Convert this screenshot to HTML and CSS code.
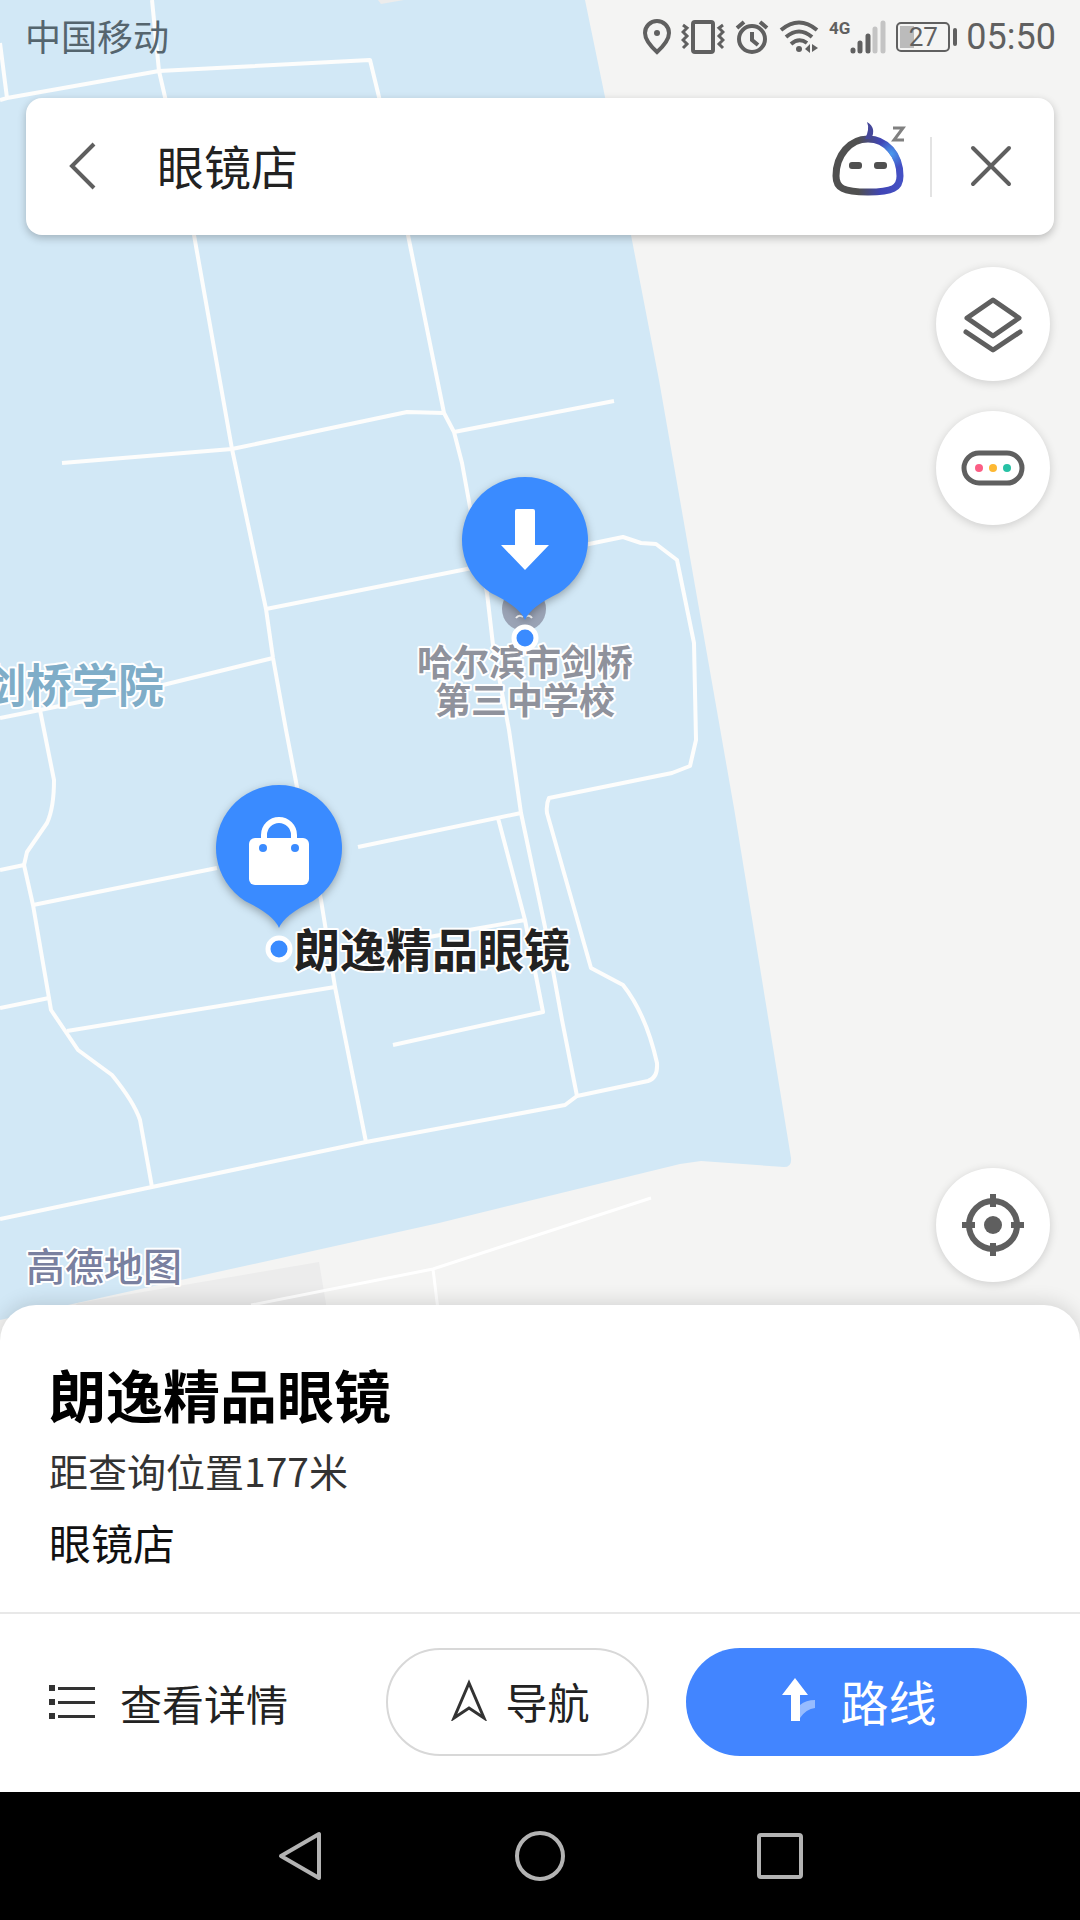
FILE: index.html
```
<!DOCTYPE html>
<html lang="zh-CN">
  <head>
    <meta charset="utf-8">
    <meta name="viewport" content="width=device-width, initial-scale=1">
    <title>眼镜店</title>
    <link rel="stylesheet" href="styles.css">
  </head>

  <body>

    <main class="map">
      <svg class="mapCanvas" viewBox="0 0 1080 1340" preserveAspectRatio="xMinYMin slice">
        <!-- campus area -->
        <path class="campus" d="M0 0H585L605 97L631 235L659 380L691 563L734 808L791 1158Q792 1167 784 1167L701 1161L680 1164L439 1223L68 1305L0 1320Z"/>
        <path class="block" d="M378 0L381 4L404 0ZM78 1303L319 1262L327 1310H68Z"/>

        <!-- roads -->
        <g class="road">
          <path d="M152 0L159 71L165 97L194 235L232 449L266 609L273 658L286 730L297 787L321 900L335 987L366 1142"/>
          <path d="M0 43L7 98M0 100L7 98L159 71L370 60L379 97L408 235L444 413L454 432L462 463L470 507L487 593L493 645L509 730L521 813L545 927L562 1020L577 1096"/>
          <path d="M62 463L232 449L407 412L444 413M454 432L614 401"/>
          <path d="M266 609L467 569L589 544L623 537L641 543L656 544L677 560L694 643L696 740L690 766L672 773L549 798Q546 804 547 813L591 968L623 985Q646 1014 657 1063Q658 1078 648 1081L577 1096L565 1105L366 1142L152 1187L0 1219"/>
          <path d="M0 718L40 710L163 685L273 658"/>
          <path d="M40 710L54 780Q54 808 47 823L27 852L24 865L33 905L49 998L51 1010L78 1050L112 1075Q134 1102 140 1120L152 1187"/>
          <path d="M0 870L24 865M33 905L217 868M0 1008L49 998M67 1031L335 987"/>
          <path d="M358 847L521 813M498 818L525 920L543 1012L393 1045M525 920L429 937"/>
        </g>
        <path class="path" d="M651 1198L433 1269L251 1305M433 1269L438 1310"/>

        <!-- labels -->
        <circle class="schoolDot" cx="524" cy="609" r="22"/>
        <path class="schoolMark" d="M516 618Q519 614 523 617M525 617Q529 614 532 618"/>
        <text class="label college" x="164" y="702" text-anchor="end">剑桥学院</text>
        <text class="label school" x="525" y="676" text-anchor="middle">哈尔滨市剑桥</text>
        <text class="label school" x="525" y="714" text-anchor="middle">第三中学校</text>
        <text class="label shop" x="294" y="967">朗逸精品眼镜</text>
        <text class="label brand" x="26" y="1281">高德地图</text>

        <!-- pins -->
        <g transform="translate(525 540)">
          <path class="pin" d="M0 80Q-5 67 -34 53A63 63 0 1 1 34 53Q5 67 0 80Z"/>
          <path fill="#fff" d="M-8-31H8Q10-31 10-29V5H24L0 30L-24 5H-10V-29Q-10-31-8-31Z"/>
          <circle class="dot" cy="98" r="11"/>
        </g>
        <g transform="translate(279 848)">
          <path class="pin" d="M0 80Q-5 67 -34 53A63 63 0 1 1 34 53Q5 67 0 80Z"/>
          <path fill="none" stroke="#fff" stroke-width="6" d="M-15-6V-13A15 15 0 0 1 15-13V-6"/>
          <rect x="-30" y="-10" width="60" height="47" rx="6" fill="#fff"/>
          <circle cx="-16" cy="0" r="4" fill="#3a8bff"/>
          <circle cx="16" cy="0" r="4" fill="#3a8bff"/>
          <circle class="dot" cy="101" r="11"/>
        </g>
      </svg>

      <div class="statusBar">
        <span class="carrier">中国移动</span>
        <div class="statusIcons">
          <svg width="28" height="36" viewBox="0 0 28 36" fill="none" stroke="#606060" stroke-width="4"><path d="M14 33Q2 22 2 14A12 12 0 0 1 26 14Q26 22 14 33Z"/><circle cx="14" cy="14" r="3" fill="#606060" stroke="none"/></svg>
          <svg width="44" height="36" viewBox="0 0 44 36" fill="none" stroke="#606060" stroke-width="3"><rect x="12" y="3" width="20" height="30" rx="2" stroke-width="4"/><path d="M2 6L6 9L2 13L6 17L2 21L6 25L2 29M42 6L38 9L42 13L38 17L42 21L38 25L42 29"/></svg>
          <svg width="34" height="36" viewBox="0 0 34 36" fill="none" stroke="#606060" stroke-width="4"><circle cx="17" cy="20" r="13"/><path d="M17 13V21L23 26M2 9L9 3M32 9L25 3"/></svg>
          <svg width="40" height="36" viewBox="0 0 40 36" fill="none" stroke="#606060" stroke-width="4"><path d="M2 11Q20-4 38 11M7 18Q20 7 33 18M12 25Q20 18 28 24"/><circle cx="20" cy="30" r="3" fill="#606060" stroke="none"/><path d="M31 25V34L26 30ZM33 33V25L39 29Z" fill="#606060" stroke="none"/></svg>
          <div class="signal">
            <span class="network">4G</span>
            <svg width="36" height="36" viewBox="0 0 36 36" fill="none" stroke="#606060" stroke-width="5" stroke-linecap="round"><path d="M3 31V32M10 24V32M18 17V32"/><path stroke="#c4c4c4" d="M25 10V32M33 4V32"/></svg>
          </div>
          <div class="battery">27</div>
          <time class="clock">05:50</time>
        </div>
      </div>

      <form class="searchBar">
        <button type="button" class="iconBtn" aria-label="返回">
          <svg width="30" height="50" viewBox="0 0 30 50" fill="none" stroke="#5f5f5f" stroke-width="4"><path d="M26 2L4 24L26 46"/></svg>
        </button>
        <input type="text" class="searchField" value="眼镜店" aria-label="搜索">
        <button type="button" class="iconBtn" aria-label="语音助手">
          <svg width="78" height="96" viewBox="0 0 78 96">
            <defs>
              <linearGradient id="botLine" x1="0" y1="0" x2="1" y2="0">
                <stop offset="0.35" stop-color="#505050"/>
                <stop offset="0.7" stop-color="#4045b5"/>
                <stop offset="1" stop-color="#4450c4"/>
              </linearGradient>
              <radialGradient id="botShine" cx="61" cy="35" r="15" gradientUnits="userSpaceOnUse">
                <stop offset="0" stop-color="#4b9cf0"/>
                <stop offset="1" stop-color="#4b9cf0" stop-opacity="0"/>
              </radialGradient>
            </defs>
            <path d="M38 20C20 20 6 36 6 57C6 69 13 73 38 73S70 69 70 57C70 36 56 20 38 20Z" fill="none" stroke="url(#botLine)" stroke-width="7"/>
            <path d="M38 20C20 20 6 36 6 57C6 69 13 73 38 73S70 69 70 57C70 36 56 20 38 20Z" fill="none" stroke="url(#botShine)" stroke-width="7"/>
            <path d="M37 3Q47 9 41 20H35Q40 10 37 3Z" fill="#45479a"/>
            <rect x="19" y="43" width="13" height="7" rx="3" fill="#505050"/>
            <rect x="44" y="43" width="13" height="7" rx="3" fill="#505050"/>
            <path d="M63 9H73L64 21H74" fill="none" stroke="#808080" stroke-width="3"/>
          </svg>
        </button>
        <span class="separator"></span>
        <button type="button" class="iconBtn" aria-label="关闭">
          <svg width="44" height="44" viewBox="0 0 44 44" fill="none" stroke="#5f5f5f" stroke-width="4" stroke-linecap="round"><path d="M5 3L41 39M41 3L5 39"/></svg>
        </button>
      </form>

      <div class="mapTools">
        <button type="button" class="roundBtn" aria-label="图层">
          <svg width="64" height="64" viewBox="0 0 64 64" fill="none" stroke="#5f5f5f" stroke-width="5" stroke-linejoin="round" stroke-linecap="round"><path d="M32 8L58 26L32 44L6 26ZM5 40L32 58L59 40"/></svg>
        </button>
        <button type="button" class="roundBtn" aria-label="路况">
          <svg width="64" height="64" viewBox="0 0 64 64"><rect x="3" y="17" width="58" height="30" rx="15" fill="none" stroke="#5f5f5f" stroke-width="5"/><circle cx="18" cy="32" r="4" fill="#fb5e85"/><circle cx="32" cy="32" r="4" fill="#fdb833"/><circle cx="46" cy="32" r="4" fill="#27c1a5"/></svg>
        </button>
        <button type="button" class="roundBtn locateBtn" aria-label="定位">
          <svg width="64" height="64" viewBox="0 0 64 64" fill="none" stroke="#5f5f5f" stroke-width="6"><circle cx="32" cy="32" r="24"/><circle cx="32" cy="32" r="9" fill="#5f5f5f" stroke="none"/><path d="M32 1V14M32 50V63M1 32H14M50 32H63"/></svg>
        </button>
      </div>
    </main>

    <section class="sheet">
      <div class="info">
        <h1>朗逸精品眼镜</h1>
        <p class="distance">距查询位置177米</p>
        <p class="category">眼镜店</p>
      </div>

      <div class="actions">
        <a href="#" class="details">
          <svg width="46" height="36" viewBox="0 0 46 36" fill="#333"><path d="M0 1H6V7H0ZM0 15H6V21H0ZM0 29H6V35H0ZM9 3H46V6H9ZM9 17H46V20H9ZM9 31H46V34H9Z"/></svg>
          查看详情
        </a>
        <button type="button" class="pill navBtn">
          <svg width="36" height="42" viewBox="0 0 36 42" fill="none" stroke="#333" stroke-width="3"><path d="M18 4L33 39L18 29L3 39Z"/></svg>
          导航
        </button>
        <button type="button" class="pill routeBtn">
          <svg width="34" height="44" viewBox="0 0 34 44" fill="#fff"><path d="M13 0L26 17H18V43H9V17H0Z"/><path opacity="0.45" d="M18 27Q24 22 33 22V30Q24 31 18 40Z"/></svg>
          路线
        </button>
      </div>
    </section>

    <nav class="systemNav">
      <button type="button" class="iconBtn" aria-label="后退">
        <svg width="56" height="56" viewBox="0 0 56 56" fill="none" stroke="#b3b3b3" stroke-width="4" stroke-linejoin="round"><path d="M9 28L47 6V50Z"/></svg>
      </button>
      <button type="button" class="iconBtn" aria-label="主屏幕">
        <svg width="56" height="56" viewBox="0 0 56 56" fill="none" stroke="#b3b3b3" stroke-width="4"><circle cx="28" cy="28" r="23"/></svg>
      </button>
      <button type="button" class="iconBtn" aria-label="最近任务">
        <svg width="56" height="56" viewBox="0 0 56 56" fill="none" stroke="#b3b3b3" stroke-width="4"><rect x="7" y="7" width="42" height="42" rx="2"/></svg>
      </button>
    </nav>

  </body>
</html>
```

FILE: styles.css
```
* {
  box-sizing: border-box;
}

body {
  margin: 0;
  min-height: 100vh;
  display: flex;
  flex-direction: column;
  background-color: #f4f4f3;
  font-family: "Noto Sans CJK SC", sans-serif;
  color: #222;
}

h1, p {
  margin: 0;
}

svg {
  display: block;
  flex-shrink: 0;
}

button, input {
  font-family: inherit;
  border: none;
  padding: 0;
  background: none;
  color: inherit;
}

a {
  color: inherit;
  text-decoration: none;
}

/* Map */

.map {
  position: relative;
  flex: 1;
  display: flex;
  flex-direction: column;
  margin-bottom: -35px; /* runs under the rounded corners of the sheet */
  padding-bottom: 58px;
  overflow: hidden;
}

.mapCanvas {
  position: absolute;
  top: 0;
  left: 0;
  width: 100%;
  height: 100%;
}

.campus {
  fill: #d2e8f6;
}

.block {
  fill: #ececec;
}

.road {
  fill: none;
  stroke: #fdfdfc;
  stroke-width: 4;
  stroke-linejoin: round;
}

.path {
  fill: none;
  stroke: #fff;
  stroke-width: 3;
}

.pin {
  fill: #3a8bff;
  filter: drop-shadow(0 3px 4px rgba(0, 0, 0, 0.3));
}

.dot {
  fill: #3a8bff;
  stroke: #fff;
  stroke-width: 5;
}

.schoolDot {
  fill: #9aa3b5;
}

.schoolMark {
  fill: none;
  stroke: #fff;
  stroke-width: 2;
}

.label {
  paint-order: stroke;
  stroke: #fff;
  stroke-width: 4px;
  stroke-linejoin: round;
  font-weight: 700;
}

.college {
  font-size: 46px;
  fill: #7fadc8;
}

.school {
  font-size: 36px;
  fill: #8f929c;
}

.shop {
  font-size: 46px;
  fill: #222;
}

.brand {
  font-size: 39px;
  font-weight: 500;
  fill: #7980a0;
}

/* Status bar */

.statusBar {
  position: relative;
  display: flex;
  justify-content: space-between;
  align-items: center;
  height: 74px;
  padding: 0 24px 0 25px;
}

.carrier {
  font-size: 36px;
  line-height: 40px;
  padding-bottom: 4px;
  color: #55656e;
}

.statusIcons {
  display: flex;
  align-items: center;
  gap: 10px;
  color: #606060;
  font-family: Roboto, sans-serif;
}

.signal {
  display: flex;
  align-items: flex-start;
}

.network {
  font-size: 17px;
  line-height: 18px;
  font-weight: 700;
}

.battery {
  position: relative;
  width: 54px;
  height: 30px;
  margin-right: 6px;
  border: 2px solid #606060;
  border-radius: 5px;
  background: linear-gradient(to right, #bbb 14px, transparent 14px) no-repeat 2px 2px / 46px 22px;
  font-size: 26px;
  line-height: 26px;
  text-align: center;
}

.battery::after {
  content: "";
  position: absolute;
  top: 4px;
  right: -9px;
  width: 4px;
  height: 18px;
  border-radius: 2px;
  background-color: #606060;
}

.clock {
  font-size: 36px;
}

/* Search */

.searchBar {
  position: relative;
  display: flex;
  align-items: center;
  height: 137px;
  margin: 24px 26px 32px;
  padding: 0 42px;
  background-color: #fff;
  border-radius: 16px;
  box-shadow: 0 3px 8px rgba(0, 0, 0, 0.24);
}

.iconBtn {
  display: flex;
}

.searchField {
  flex: 1;
  min-width: 0;
  margin-left: 59px;
  padding-bottom: 4px;
  font-size: 47px;
  outline: none;
}

.separator {
  width: 2px;
  height: 60px;
  margin: 0 36px 0 22px;
  background-color: #e3e3e3;
}

/* Round buttons on the right */

.mapTools {
  position: relative;
  flex: 1;
  display: flex;
  flex-direction: column;
  align-items: flex-end;
  gap: 30px;
  padding-right: 30px;
}

.roundBtn {
  display: flex;
  justify-content: center;
  align-items: center;
  width: 114px;
  height: 114px;
  border-radius: 50%;
  background-color: #fff;
  box-shadow: 0 2px 10px rgba(0, 0, 0, 0.16);
}

.locateBtn {
  margin-top: auto;
}

/* Place sheet */

.sheet {
  position: relative;
  background-color: #fff;
  border-radius: 36px 36px 0 0;
  box-shadow: 0 -2px 20px rgba(0, 0, 0, 0.14);
}

.info {
  padding: 52px 49px 40px;
  border-bottom: 2px solid #e8e8e8;
}

h1 {
  font-size: 57px;
  line-height: 72px;
  font-weight: 700;
  color: #000;
}

.distance {
  margin-top: 11px;
  font-size: 39px;
  line-height: 60px;
  color: #333;
}

.category {
  margin-top: 12px;
  font-size: 42px;
  line-height: 60px;
  color: #111;
}

.actions {
  display: flex;
  align-items: center;
  gap: 37px;
  padding: 34px 53px 36px 49px;
}

.details {
  flex: 1;
  display: flex;
  align-items: center;
  gap: 25px;
  font-size: 42px;
}

.pill {
  display: flex;
  justify-content: center;
  align-items: center;
  height: 108px;
  border-radius: 54px;
  padding: 0 0 4px 6px;
}

.navBtn {
  width: 263px;
  gap: 18px;
  border: 2px solid #d8d8d8;
  font-size: 42px;
}

.routeBtn {
  width: 341px;
  gap: 24px;
  background-color: #4285ff;
  color: #fff;
  font-size: 48px;
}

/* System navigation */

.systemNav {
  display: flex;
  justify-content: center;
  align-items: center;
  gap: 184px;
  height: 128px;
  background-color: #000;
}
```
